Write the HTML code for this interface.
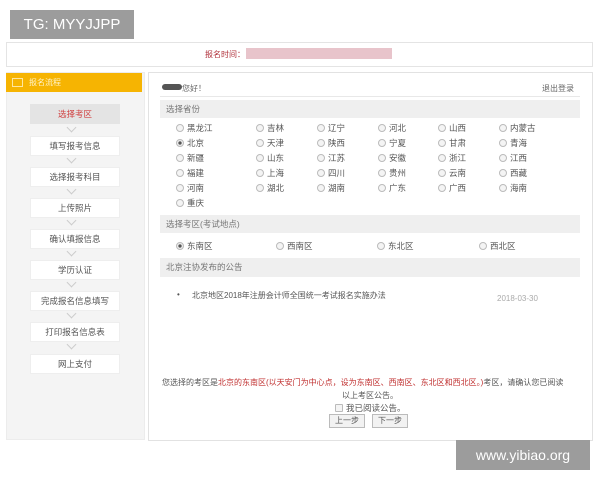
<!DOCTYPE html><html><head><meta charset="utf-8"><style>
body{margin:0;width:600px;height:480px;background:#fff;position:relative;overflow:hidden;font-family:"Liberation Sans","Noto Sans CJK SC",sans-serif;font-size:9px;color:#555}
.a{position:absolute;white-space:nowrap}
.r{display:inline-block;width:6px;height:6px;border:1px solid #bbb;border-radius:50%;margin-right:3px;vertical-align:-1px;background:#f4f4f4}
.r.on{background:radial-gradient(#555 35%,#eee 45%)}
.it{position:absolute;left:30px;width:88px;height:18px;background:#fff;border:1px solid #eee;text-align:center;line-height:18px;font-size:8.5px;color:#555}
.ch{position:absolute;left:68px;width:6px;height:6px;border-right:1px solid #ccc;border-bottom:1px solid #ccc;transform:rotate(45deg)}
.sh{position:absolute;left:160px;width:420px;height:18px;background:#efefef;line-height:18px;padding-left:6px;box-sizing:border-box;color:#777;font-size:8.5px}
.btn{position:absolute;top:414px;height:12px;width:34px;border:1px solid #bbb;background:#f2f2f2;font-size:8px;text-align:center;line-height:12px}
</style></head><body>
<div class="a" style="left:10px;top:10px;width:124px;height:29px;background:#9c9c9c;color:#fff;font-size:15px;line-height:29px;text-align:center">TG: MYYJJPP</div>
<div class="a" style="left:6px;top:42px;width:585px;height:23px;border:1px solid #e4e4e4"></div>
<div class="a" style="left:205px;top:49px;color:#b0303a;font-size:8px">报名时间：</div>
<div class="a" style="left:246px;top:48px;width:146px;height:11px;background:#e8c4cb"></div>
<div class="a" style="left:6px;top:72px;width:137px;height:366px;background:#f4f4f4;border:1px solid #ececec"></div>
<div class="a" style="left:6px;top:73px;width:136px;height:19px;background:#f6b402"></div>
<div class="a" style="left:12px;top:78px;width:9px;height:7px;border:1px solid #ffe7a0"></div>
<div class="a" style="left:29px;top:77px;color:#fff3c8;font-size:8px">报名流程</div>
<div class="it" style="top:104px;background:#e4e4e4;border-color:#e4e4e4;color:#d04040">选择考区</div>
<div class="ch" style="top:124px"></div>
<div class="it" style="top:136px">填写报考信息</div><div class="ch" style="top:155px"></div>
<div class="it" style="top:167px">选择报考科目</div><div class="ch" style="top:186px"></div>
<div class="it" style="top:198px">上传照片</div><div class="ch" style="top:217px"></div>
<div class="it" style="top:229px">确认填报信息</div><div class="ch" style="top:248px"></div>
<div class="it" style="top:260px">学历认证</div><div class="ch" style="top:279px"></div>
<div class="it" style="top:291px">完成报名信息填写</div><div class="ch" style="top:310px"></div>
<div class="it" style="top:322px">打印报名信息表</div><div class="ch" style="top:341px"></div>
<div class="it" style="top:354px">网上支付</div>
<div class="a" style="left:148px;top:72px;width:443px;height:367px;border:1px solid #e2e2e2"></div>
<div class="a" style="left:162px;top:84px;width:20px;height:6px;background:#555;border-radius:3px"></div>
<div class="a" style="left:182px;top:83px;font-size:8px;color:#666">您好！</div>
<div class="a" style="left:542px;top:83px;font-size:8px;color:#666">退出登录</div>
<div class="a" style="left:160px;top:96px;width:420px;border-top:1px solid #e8e8e8"></div>
<div class="sh" style="top:100px">选择省份</div>
<div class="a" style="left:176px;top:121px;line-height:15px;font-size:8.5px">
<div style="position:relative;height:90px">
<div class="a" style="left:0"><span class="r"></span>黑龙江<br><span class="r on"></span>北京<br><span class="r"></span>新疆<br><span class="r"></span>福建<br><span class="r"></span>河南<br><span class="r"></span>重庆</div>
<div class="a" style="left:80px"><span class="r"></span>吉林<br><span class="r"></span>天津<br><span class="r"></span>山东<br><span class="r"></span>上海<br><span class="r"></span>湖北</div>
<div class="a" style="left:141px"><span class="r"></span>辽宁<br><span class="r"></span>陕西<br><span class="r"></span>江苏<br><span class="r"></span>四川<br><span class="r"></span>湖南</div>
<div class="a" style="left:202px"><span class="r"></span>河北<br><span class="r"></span>宁夏<br><span class="r"></span>安徽<br><span class="r"></span>贵州<br><span class="r"></span>广东</div>
<div class="a" style="left:262px"><span class="r"></span>山西<br><span class="r"></span>甘肃<br><span class="r"></span>浙江<br><span class="r"></span>云南<br><span class="r"></span>广西</div>
<div class="a" style="left:323px"><span class="r"></span>内蒙古<br><span class="r"></span>青海<br><span class="r"></span>江西<br><span class="r"></span>西藏<br><span class="r"></span>海南</div>
</div></div>
<div class="sh" style="top:215px">选择考区(考试地点)</div>
<div class="a" style="left:176px;top:240px;font-size:8.5px"><span class="r on"></span>东南区</div>
<div class="a" style="left:276px;top:240px;font-size:8.5px"><span class="r"></span>西南区</div>
<div class="a" style="left:377px;top:240px;font-size:8.5px"><span class="r"></span>东北区</div>
<div class="a" style="left:479px;top:240px;font-size:8.5px"><span class="r"></span>西北区</div>
<div class="sh" style="top:258px;height:19px">北京注协发布的公告</div>
<div class="a" style="left:177px;top:290px;font-size:8px">•</div>
<div class="a" style="left:192px;top:290px;font-size:8px">北京地区2018年注册会计师全国统一考试报名实施办法</div>
<div class="a" style="left:497px;top:294px;font-size:8px;color:#aaa">2018-03-30</div>
<div class="a" style="left:162px;top:377px;font-size:8px">您选择的考区是<span style="color:#c03030">北京的东南区(以天安门为中心点，设为东南区、西南区、东北区和西北区。)</span>考区，请确认您已阅读</div>
<div class="a" style="left:342px;top:390px;font-size:8px">以上考区公告。</div>
<div class="a" style="left:335px;top:402px;font-size:8.5px"><span class="r" style="border-radius:1px"></span>我已阅读公告。</div>
<div class="btn" style="left:329px">上一步</div>
<div class="btn" style="left:372px">下一步</div>
<div class="a" style="left:456px;top:440px;width:134px;height:30px;background:#9c9c9c;color:#fff;font-size:14px;line-height:30px;text-align:center">www.yibiao.org</div>
</body></html>
